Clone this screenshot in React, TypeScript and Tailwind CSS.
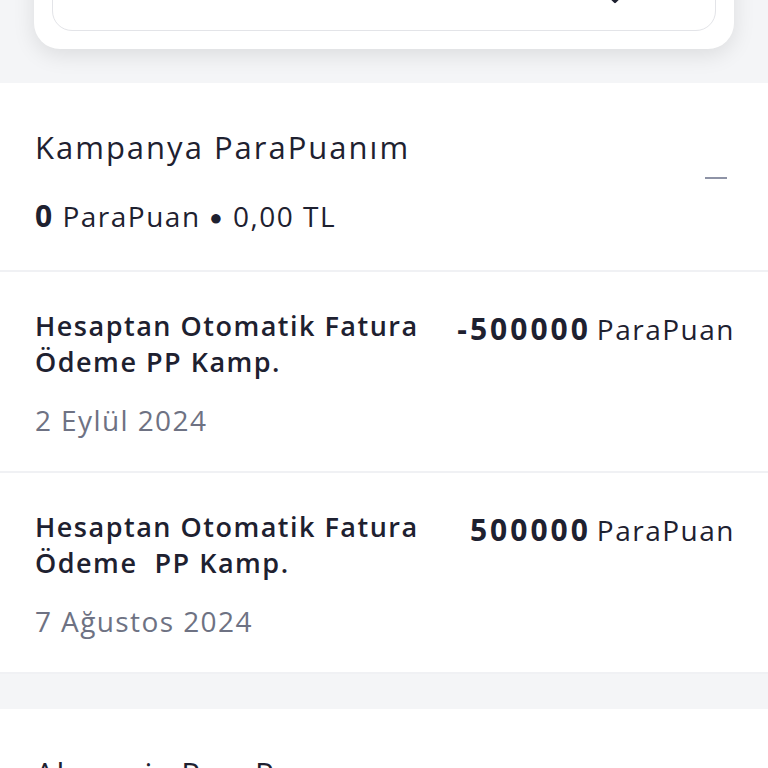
import React from "react";

const font = { fontFamily: "'Open Sans', 'Noto Sans', sans-serif" };

function Row({ title1, title2, amount, date }: { title1: string; title2: string; amount: string; date: string }) {
  return (
    <div className="px-[35px] pt-[36px] pb-[33px] border-b-2 border-[#f0f1f4]">
      <div className="flex justify-between items-start">
        <div className="text-[27px] leading-[36px] font-semibold tracking-[1.5px] text-[#1e2130]">
          <div>{title1}</div>
          <div className="whitespace-pre">{title2}</div>
        </div>
        <div className="leading-[44px] -mt-[1px] text-[#1e2130] whitespace-nowrap -mr-[2px]">
          <span className="text-[30px] font-bold tracking-[3px]">{amount}</span>
          <span className="text-[28px] ml-[6px] tracking-[1.5px]">ParaPuan</span>
        </div>
      </div>
      <div className="mt-[22px] text-[28px] leading-[36px] tracking-[1.4px] text-[#6e7283]">{date}</div>
    </div>
  );
}

export default function App() {
  return (
    <div className="bg-white w-[768px] h-[768px] overflow-hidden" style={font}>
      <div className="bg-[#f4f5f7] pb-[34px]">
        <div className="mx-[34px] -mt-[60px] bg-white rounded-[26px] shadow-[0_6px_22px_rgba(0,0,0,0.10)] p-[18px]">
          <div className="h-[73px] border border-[#e3e4e8] rounded-[20px] flex items-end justify-end pr-[92px] pb-[26px]">
            <svg width="16" height="10" viewBox="0 0 16 10" fill="none">
              <path d="M2 2l6 6 6-6" stroke="#1e2130" strokeWidth="2.4" strokeLinecap="round" strokeLinejoin="round" />
            </svg>
          </div>
        </div>
      </div>

      <div className="bg-white">
        <div className="px-[35px] pt-[44px] pb-[34px] flex items-center justify-between border-b-2 border-[#f0f1f4]">
          <div>
            <div className="text-[31px] leading-[40px] tracking-[2px] text-[#1e2130]">Kampanya ParaPuanım</div>
            <div className="mt-[29px] text-[28px] leading-[40px] tracking-[1.5px] text-[#1e2130]">
              <span className="font-bold text-[30px]">0</span> ParaPuan <span className="text-[22px] align-[2px]">●</span> 0,00 TL
            </div>
          </div>
          <div className="w-[22px] h-[2px] bg-[#8e93a6] mr-[6px] -mt-[8px]" />
        </div>
        <Row title1="Hesaptan Otomatik Fatura" title2="Ödeme PP Kamp." amount="-500000" date="2 Eylül 2024" />
        <Row title1="Hesaptan Otomatik Fatura" title2="Ödeme  PP Kamp." amount="500000" date="7 Ağustos 2024" />
      </div>

      <div className="h-[35px] bg-[#f4f5f7]" />
      <div className="bg-white px-[35px] pt-[44px]">
        <div className="text-[31px] leading-[40px] tracking-[2px] text-[#1e2130]">Alışveriş ParaPuanım</div>
      </div>
    </div>
  );
}
